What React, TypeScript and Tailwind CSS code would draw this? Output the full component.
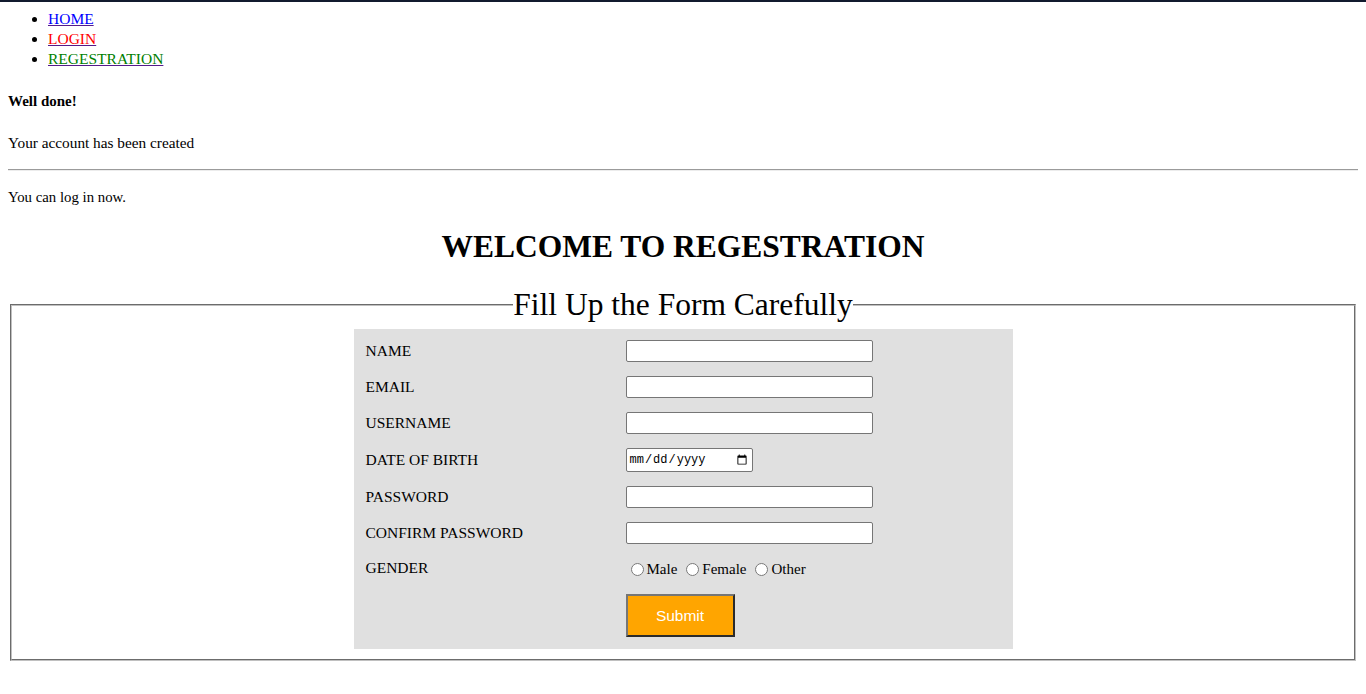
import { useState } from "react";

const FIELDS = [
  { label: "NAME", type: "text", row: "h-[36px]" },
  { label: "EMAIL", type: "email", row: "h-[36px]" },
  { label: "USERNAME", type: "text", row: "h-[36px]" },
  { label: "DATE OF BIRTH", type: "date", row: "h-[37px]" },
  { label: "PASSWORD", type: "password", row: "h-[37px]" },
  { label: "CONFIRM PASSWORD", type: "password", row: "h-[36px]" },
];

const GENDERS = ["Male", "Female", "Other"];

export default function App() {
  const [gender, setGender] = useState("");

  return (
    <div className="min-h-screen bg-white font-['Liberation_Serif',serif] text-black">
      <div className="h-[2px] w-full bg-[#111a2e]" />

      <div className="px-2">
        <ul className="mt-[7px] list-disc pl-10 text-[15.5px] leading-[20px]">
          <li>
            <a href="#" className="text-[#0000ff] underline decoration-[#551a8b]">
              HOME
            </a>
          </li>
          <li>
            <a href="#" className="text-[#ff0000] underline decoration-[#551a8b]">
              LOGIN
            </a>
          </li>
          <li>
            <a href="#" className="text-[#008000] underline decoration-[#551a8b]">
              REGESTRATION
            </a>
          </li>
        </ul>

        <p className="mt-[22px] text-[15px] font-bold leading-[20px]">Well done!</p>
        <p className="mt-[22px] text-[15.3px] leading-[20px]">Your account has been created</p>
        <div className="mt-[16px] h-[2px] border-t border-b border-t-[#9b9b9b] border-b-[#ececec]" />
        <p className="mt-[16px] text-[14.8px] leading-[20px]">You can log in now.</p>

        <h1 className="mt-[22px] text-center text-[31.5px] font-bold leading-[36px]">
          WELCOME TO REGESTRATION
        </h1>

        <fieldset className="mx-[2px] mt-[22px] border-2 border-[#c0c0c0] px-3 pt-[6px] pb-[10px] [border-style:groove]">
          <legend className="mx-auto px-0 text-[31.5px] leading-[36px]">
            Fill Up the Form Carefully
          </legend>

          <div className="mx-auto w-[659px] bg-[#e0e0e0] px-3 pt-1 pb-3 text-[15.5px]">
            {FIELDS.map((f) => (
              <div key={f.label} className={`flex items-center ${f.row}`}>
                <span className="w-[260px]">{f.label}</span>
                {f.type === "date" ? (
                  <input
                    type="date"
                    className="h-[24px] w-[127px] rounded-[2px] border border-[#767676] bg-white px-[2px] font-['Liberation_Mono',monospace] text-[12px]"
                  />
                ) : (
                  <input
                    type={f.type}
                    className="h-[22px] w-[247px] rounded-[2px] border border-[#767676] bg-white px-[2px]"
                  />
                )}
              </div>
            ))}

            <div className="flex h-[34px] items-center">
              <span className="w-[260px]">GENDER</span>
              <div className="flex items-center pt-[2px] text-[15px]">
                {GENDERS.map((g) => (
                  <label key={g} className="mr-[4px] flex items-center">
                    <input
                      type="radio"
                      name="gender"
                      checked={gender === g}
                      onChange={() => setGender(g)}
                      className="mr-[3px] ml-[5px] h-[13px] w-[13px]"
                    />
                    {g}
                  </label>
                ))}
              </div>
            </div>

            <div className="pt-[9px]">
              <button
                type="button"
                className="ml-[260px] h-[43px] w-[109px] border-2 border-t-[#767676] border-l-[#767676] border-r-[#2b2b2b] border-b-[#2b2b2b] bg-[#ffa500] font-['Liberation_Sans',sans-serif] text-[15.5px] text-white"
              >
                Submit
              </button>
            </div>
          </div>
        </fieldset>
      </div>
    </div>
  );
}
